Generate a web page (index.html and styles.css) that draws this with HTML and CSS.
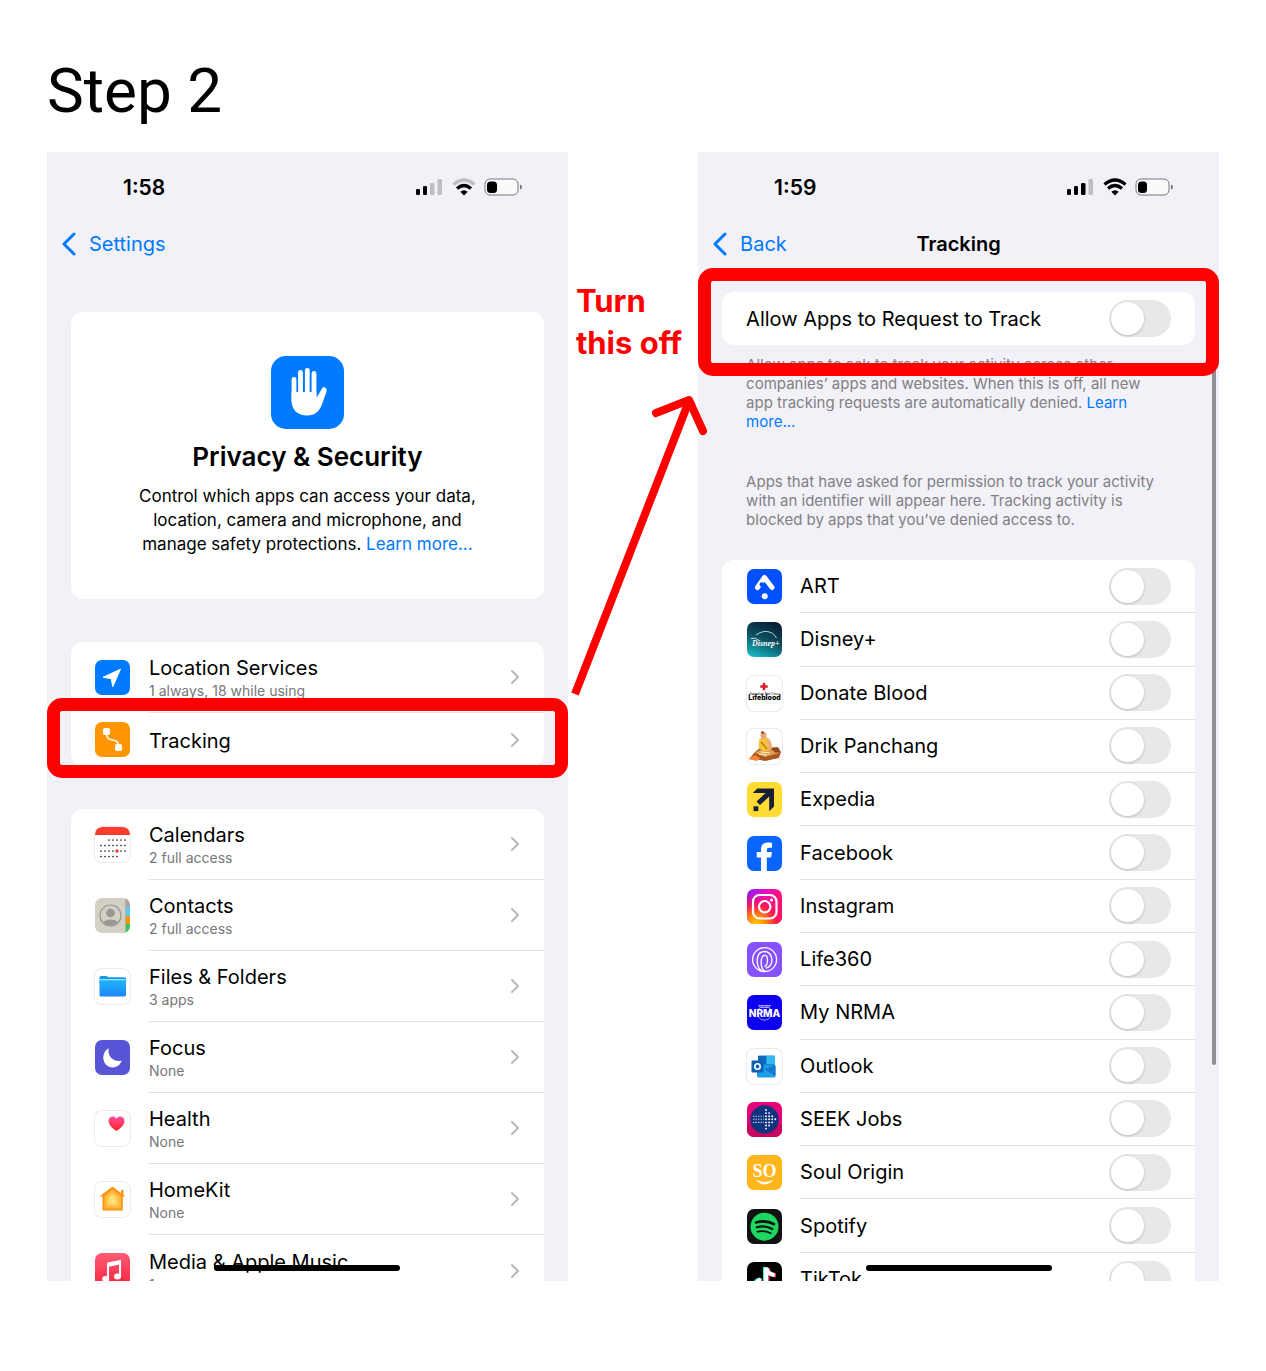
FILE: index.html
```html
<!DOCTYPE html>
<html lang="en">
<head>
<meta charset="utf-8">
<meta name="viewport" content="width=device-width, initial-scale=1">
<title>Step 2</title>
<link rel="stylesheet" href="styles.css">
</head>
<body>
<main class="page">
  <h1 class="title">Step 2</h1>
  <div class="board">

    <section class="phone" aria-label="Privacy and Security settings">
      <div class="status">
        <span class="time">1:58</span>
        <svg class="status-icons" viewBox="0 0 108 20" aria-hidden="true">
          <rect x="1" y="12" width="4" height="6" rx="1.3"/><rect x="8" y="9" width="4" height="9" rx="1.3"/>
          <g fill="#bfbec3"><rect x="15" y="6" width="4.500" height="12" rx="1.300"/><rect x="22.500" y="2" width="4.500" height="16" rx="1.300"/></g>
          <g fill="none" stroke-width="3.200"><path d="M38.500 7.500Q49 -1.500 59.500 7.500" stroke="#bfbec3"/><path d="M42 11.500Q49 5.500 56 11.500" stroke="#000"/></g>
          <path d="M45.300 14.800Q49 11.800 52.700 14.800L49 18.500Z"/>
          <rect x="70" y="2" width="33" height="16" rx="5" fill="#fafafb" stroke="#77777a"/>
          <rect x="72" y="4.500" width="10" height="11.500" rx="3.500"/><path d="M105 7.500q2 .5 2 2.500t-2 2.500z" fill="#77777a"/>
        </svg>
      </div>
      <nav class="nav">
        <a class="back" href="#settings"><svg viewBox="0 0 14 24" aria-hidden="true"><path d="M12 2 2 12l10 10"/></svg>Settings</a>
      </nav>

      <div class="card hero">
        <svg class="hero-icon" viewBox="0 0 73 73" aria-hidden="true">
          <rect width="73" height="73" rx="15" fill="#007aff"/>
          <g fill="none" stroke="#fff" stroke-width="4.800" stroke-linecap="round"><path d="M23 23.500v22M29.500 16.500v26M36.300 14.500v27M43 17.500v27"/></g>
          <path d="M20.600 36V45C20.600 54 27 59.500 36 59.500C44 59.500 49 55 51.500 47L55.500 35.500C56.300 32.500 54 30.500 51.500 31.700L45.400 42V36Z" fill="#fff"/>
        </svg>
        <h2 class="hero-title">Privacy &amp; Security</h2>
        <p class="hero-text">Control which apps can access your data,<br>location, camera and microphone, and<br>manage safety protections. <a href="#learn-privacy">Learn more...</a></p>
      </div>

      <div class="card group">
        <a class="row" href="#location">
          <svg class="icon" viewBox="0 0 35 35" aria-hidden="true"><rect width="35" height="35" rx="7" fill="#007aff"/><path d="M8 17.300 25.500 9.200 17.800 26.700 16.200 18.600Z" fill="#fff" stroke="#fff" stroke-linejoin="round"/></svg>
          <span class="cell"><span class="words"><span class="name">Location Services</span><span class="sub">1 always, 18 while using</span></span><svg class="chevron" viewBox="0 0 10 16" aria-hidden="true"><path d="m2 2 6 6-6 6"/></svg></span>
        </a>
        <a class="row row-short" href="#tracking">
          <svg class="icon" viewBox="0 0 35 35" aria-hidden="true"><rect width="35" height="35" rx="7" fill="#ff9500"/><g fill="#fff"><rect x="8" y="6" width="7" height="7" rx="1.700"/><rect x="20" y="22" width="7" height="7" rx="1.700"/></g><path d="M11.500 12C11.500 22 23.500 14 23.500 24" fill="none" stroke="#fff" stroke-width="1.600"/></svg>
          <span class="cell"><span class="words"><span class="name">Tracking</span></span><svg class="chevron" viewBox="0 0 10 16" aria-hidden="true"><path d="m2 2 6 6-6 6"/></svg></span>
          <span class="mark mark-row"></span>
        </a>
      </div>

      <div class="card group">
        <a class="row" href="#calendars">
          <svg class="icon edged" viewBox="0 0 35 35" aria-hidden="true"><path d="M0 8V7a7 7 0 0 1 7-7h21a7 7 0 0 1 7 7v1z" fill="#ff3b30"/><g stroke="#222" stroke-width="1.700" stroke-linecap="round" stroke-dasharray="0 4" fill="none"><path d="M14 13h16.100M6 18.500h24.100M6 24h24.100M6 29.500h16.100"/></g><circle cx="22" cy="24" r="1.700" fill="#ff3b30"/></svg>
          <span class="cell"><span class="words"><span class="name">Calendars</span><span class="sub">2 full access</span></span><svg class="chevron" viewBox="0 0 10 16" aria-hidden="true"><path d="m2 2 6 6-6 6"/></svg></span>
        </a>
        <a class="row" href="#contacts">
          <svg class="icon" viewBox="0 0 35 35" aria-hidden="true"><defs><clipPath id="tile"><rect width="35" height="35" rx="7"/></clipPath><clipPath id="face"><circle cx="15.500" cy="17.500" r="10"/></clipPath></defs><g clip-path="url(#tile)"><rect width="35" height="35" fill="#d3d0c6"/><rect x="31" width="4" height="9" fill="#aaa69c"/><rect x="31" y="9" width="4" height="9" fill="#5ac8fa"/><rect x="31" y="18" width="4" height="8" fill="#ff9500"/><rect x="31" y="26" width="4" height="9" fill="#34c759"/><path d="M30.500 0v35" stroke="#b5b1a7"/></g><circle cx="15.500" cy="17.500" r="10.500" fill="none" stroke="#9c9790" stroke-width="1.200"/><g clip-path="url(#face)" fill="#9c9790"><circle cx="15.500" cy="15" r="4.300"/><ellipse cx="15.500" cy="27.500" rx="9" ry="6"/></g></svg>
          <span class="cell"><span class="words"><span class="name">Contacts</span><span class="sub">2 full access</span></span><svg class="chevron" viewBox="0 0 10 16" aria-hidden="true"><path d="m2 2 6 6-6 6"/></svg></span>
        </a>
        <a class="row" href="#files">
          <svg class="icon edged" viewBox="0 0 35 35" aria-hidden="true"><defs><linearGradient id="folder" x2="0" y2="1"><stop stop-color="#1fb6fb"/><stop offset="1" stop-color="#1a85f6"/></linearGradient></defs><path d="M4.500 8.500Q4.500 7 6 7h5q1.500 0 2 1.200h16.500q1.500 0 1.500 1.500V14H4.500z" fill="#0f9be8"/><rect x="4.500" y="11" width="26.500" height="16.500" rx="1.500" fill="url(#folder)"/><path d="M5 10.700h25.500" stroke="#c6edff"/></svg>
          <span class="cell"><span class="words"><span class="name">Files &amp; Folders</span><span class="sub">3 apps</span></span><svg class="chevron" viewBox="0 0 10 16" aria-hidden="true"><path d="m2 2 6 6-6 6"/></svg></span>
        </a>
        <a class="row" href="#focus">
          <svg class="icon" viewBox="0 0 35 35" aria-hidden="true"><rect width="35" height="35" rx="7" fill="#5856d6"/><path d="M13.700 8.200C12.300 15.700 17.500 22 26.500 20.800C25 25.500 21.500 27.500 17.800 27.500C12.500 27.500 8.300 23.300 8.300 17.800C8.300 13.300 10.600 9.800 13.700 8.200Z" fill="#fff"/></svg>
          <span class="cell"><span class="words"><span class="name">Focus</span><span class="sub">None</span></span><svg class="chevron" viewBox="0 0 10 16" aria-hidden="true"><path d="m2 2 6 6-6 6"/></svg></span>
        </a>
        <a class="row" href="#health">
          <svg class="icon edged" viewBox="0 0 35 35" aria-hidden="true"><defs><linearGradient id="heart" x2="0" y2="1"><stop stop-color="#ff4fa0"/><stop offset="1" stop-color="#ff2020"/></linearGradient></defs><path d="M21.500 20C16.500 16.500 13.500 13.500 13.500 9.800C13.500 5.300 19 3.800 21.500 7.500C24 3.800 29.500 5.300 29.500 9.800C29.500 13.500 26.500 16.500 21.500 20Z" fill="url(#heart)"/></svg>
          <span class="cell"><span class="words"><span class="name">Health</span><span class="sub">None</span></span><svg class="chevron" viewBox="0 0 10 16" aria-hidden="true"><path d="m2 2 6 6-6 6"/></svg></span>
        </a>
        <a class="row" href="#homekit">
          <svg class="icon edged" viewBox="0 0 35 35" aria-hidden="true"><path d="M26 8h2.500v6H26zM17.500 4.500 30.500 14.500h-2.700V28.500H7.500V14.500H4.500Z" fill="#ff9212"/><path d="M17.500 7.500 26 14.300V26.500H9.500V14.300Z" fill="#ffb83e"/><path d="M17.500 10.500 23.500 15V24H12V15Z" fill="#ffca50"/><path d="M17.500 13 21 16v6h-7v-6Z" fill="#ffe07a"/></svg>
          <span class="cell"><span class="words"><span class="name">HomeKit</span><span class="sub">None</span></span><svg class="chevron" viewBox="0 0 10 16" aria-hidden="true"><path d="m2 2 6 6-6 6"/></svg></span>
        </a>
        <a class="row" href="#media">
          <svg class="icon" viewBox="0 0 35 35" aria-hidden="true"><defs><linearGradient id="music" x2="0" y2="1"><stop stop-color="#fb5c74"/><stop offset="1" stop-color="#fa233b"/></linearGradient></defs><rect width="35" height="35" rx="7" fill="url(#music)"/><path d="M13 25V11.300L25 8.700V22.500" fill="none" stroke="#fff" stroke-width="2"/><path d="M12.500 9.500 26 6.700v4.500L12.500 14z" fill="#fff"/><ellipse cx="10.700" cy="26" rx="3.500" ry="3" fill="#fff"/><ellipse cx="22.500" cy="23.500" rx="3.500" ry="3" fill="#fff"/></svg>
          <span class="cell"><span class="words"><span class="name">Media &amp; Apple Music</span><span class="sub">1</span></span><svg class="chevron" viewBox="0 0 10 16" aria-hidden="true"><path d="m2 2 6 6-6 6"/></svg></span>
        </a>
      </div>
      <span class="home-bar"></span>
    </section>

    <aside class="note">
      <p class="note-text">Turn<br>this off</p>
      <svg class="arrow" viewBox="0 0 140 310" aria-hidden="true"><path d="M7 306 121 13" stroke-width="8"/><path d="M88 25 121 12 135 43" stroke-width="8" stroke-linecap="round" stroke-linejoin="round"/></svg>
    </aside>

    <section class="phone" aria-label="Tracking settings">
      <div class="status">
        <span class="time">1:59</span>
        <svg class="status-icons" viewBox="0 0 108 20" aria-hidden="true">
          <rect x="1" y="12" width="4" height="6" rx="1.300"/><rect x="8" y="9" width="4" height="9" rx="1.300"/><rect x="15" y="6" width="4.500" height="12" rx="1.300"/>
          <rect x="22.500" y="2" width="4.500" height="16" rx="1.300" fill="#bfbec3"/>
          <g fill="none" stroke="#000" stroke-width="3.200"><path d="M38.500 7.500Q49 -1.500 59.500 7.500"/><path d="M42 11.500Q49 5.500 56 11.500"/></g>
          <path d="M45.300 14.800Q49 11.800 52.700 14.800L49 18.500Z"/>
          <rect x="70" y="2" width="33" height="16" rx="5" fill="#fafafb" stroke="#77777a"/>
          <rect x="72" y="4.500" width="9" height="11.500" rx="3.500"/><path d="M105 7.500q2 .5 2 2.500t-2 2.500z" fill="#77777a"/>
        </svg>
      </div>
      <nav class="nav">
        <a class="back" href="#back"><svg viewBox="0 0 14 24" aria-hidden="true"><path d="M12 2 2 12l10 10"/></svg>Back</a>
        <h2 class="nav-title">Tracking</h2>
      </nav>

      <div class="card allow">
        <label class="allow-row"><span class="name">Allow Apps to Request to Track</span><input class="toggle" type="checkbox" role="switch"></label>
        <span class="mark mark-allow"></span>
      </div>
      <p class="fine">Allow apps to ask to track your activity across other<br>companies’ apps and websites. When this is off, all new<br>app tracking requests are automatically denied. <a href="#learn-tracking">Learn<br>more...</a></p>
      <p class="fine fine-apps">Apps that have asked for permission to track your activity<br>with an identifier will appear here. Tracking activity is<br>blocked by apps that you’ve denied access to.</p>

      <div class="card apps">
        <label class="app">
          <svg class="icon" viewBox="0 0 35 35" aria-hidden="true"><rect width="35" height="35" rx="7" fill="#0050ff"/><path d="M10.500 18.500 17.500 8.500 25 18.500" fill="none" stroke="#fff" stroke-width="5" stroke-linecap="round" stroke-linejoin="round"/><circle cx="14.800" cy="15.500" r="2.300" fill="#0050ff"/><circle cx="17.700" cy="27.200" r="3" fill="#fff"/></svg>
          <span class="cell"><span class="name">ART</span><input class="toggle" type="checkbox" role="switch"></span>
        </label>
        <label class="app">
          <svg class="icon" viewBox="0 0 35 35" aria-hidden="true"><defs><linearGradient id="disney" x1=".7" x2=".3" y2="1"><stop stop-color="#071d31"/><stop offset=".5" stop-color="#0c5061"/><stop offset="1" stop-color="#16b1bc"/></linearGradient></defs><rect width="35" height="35" rx="7" fill="url(#disney)"/><path d="M9 13Q17 7 25 11 28 13 29.500 16" fill="none" stroke="#d4f1f5" stroke-width=".8"/><path d="M4 16.500Q9 15 12 18.500" fill="none" stroke="#fff" stroke-width=".8"/><text x="5" y="24" class="logo-disney">Disnep+</text></svg>
          <span class="cell"><span class="name">Disney+</span><input class="toggle" type="checkbox" role="switch"></span>
        </label>
        <label class="app">
          <svg class="icon edged" viewBox="0 0 35 35" aria-hidden="true"><path d="M17 6.800v7.400M13.300 10.500h7.400" stroke="#d91f26" stroke-width="2.500"/><text x="17.500" y="18.500" class="logo-cross">Australian Red Cross</text><text x="17.500" y="24.300" class="logo-blood">Lifeblood</text></svg>
          <span class="cell"><span class="name">Donate Blood</span><input class="toggle" type="checkbox" role="switch"></span>
        </label>
        <label class="app">
          <svg class="icon edged" viewBox="0 0 35 35" aria-hidden="true"><path d="M7 24 13 19l18-1 3 5-2 6-14 3-15-3z" fill="#a9581f"/><path d="M8 24 15 20l13 1 4 3-14 4z" fill="#e2a052"/><path d="M12 20c-1-5 0-10 3-12h4c5 2 6 7 6 12l-5 2z" fill="#efae79"/><path d="M12 10q6 1 7-2l2 13-4 1-5-4z" fill="#f2ca32"/><path d="M14 13l6 7" stroke="#d96a22" stroke-width="1.500"/><circle cx="16.500" cy="6" r="3" fill="#e9a16f"/><circle cx="15.500" cy="3.500" r="1.300" fill="#773a22"/><path d="M1 30l7-4 5 3-3 3z" fill="#f0863a"/><path d="M24 20q5-3 9 2l-4 2z" fill="#8c481f"/><path d="m14 23 9 1M12 25l8 1" stroke="#fff3cf"/></svg>
          <span class="cell"><span class="name">Drik Panchang</span><input class="toggle" type="checkbox" role="switch"></span>
        </label>
        <label class="app">
          <svg class="icon" viewBox="0 0 35 35" aria-hidden="true"><rect width="35" height="35" rx="7" fill="#fddb32"/><path d="M5.800 11 10.300 6.500H27V24.500L22.200 29.300V14.500L13 23 9.500 19.500 18.500 11Z" fill="#191e3b"/><path d="M6.500 24.300h4.800v4.800H6.500z" fill="#191e3b"/></svg>
          <span class="cell"><span class="name">Expedia</span><input class="toggle" type="checkbox" role="switch"></span>
        </label>
        <label class="app">
          <svg class="icon" viewBox="0 0 35 35" aria-hidden="true"><rect width="35" height="35" rx="7" fill="#0866ff"/><path d="M14 35V21.500H9.700V16H14V13.500C14 8.800 16.500 6.500 21 6.500L25 6.800V11.700H22.500C20.500 11.700 19.800 12.500 19.800 14.200V16H25L24 21.500H19.800V35Z" fill="#fff"/></svg>
          <span class="cell"><span class="name">Facebook</span><input class="toggle" type="checkbox" role="switch"></span>
        </label>
        <label class="app">
          <svg class="icon" viewBox="0 0 35 35" aria-hidden="true"><defs><linearGradient id="insta" x2="1" y2=".2"><stop stop-color="#7a1cff"/><stop offset=".5" stop-color="#e60bc8"/><stop offset="1" stop-color="#ff1370"/></linearGradient><radialGradient id="glow" cx=".25" cy="1.050" r="1"><stop stop-color="#ffd500"/><stop offset=".3" stop-color="#ff8a10"/><stop offset=".6" stop-color="#ff1848" stop-opacity=".9"/><stop offset="1" stop-color="#ff0a80" stop-opacity="0"/></radialGradient></defs><rect width="35" height="35" rx="7" fill="url(#insta)"/><rect width="35" height="35" rx="7" fill="url(#glow)"/><g fill="none" stroke="#fff" stroke-width="2.200"><rect x="6" y="6" width="23.500" height="23.500" rx="6.500"/><circle cx="17.700" cy="17.700" r="5.700"/></g><circle cx="24.500" cy="11" r="1.600" fill="#fff"/></svg>
          <span class="cell"><span class="name">Instagram</span><input class="toggle" type="checkbox" role="switch"></span>
        </label>
        <label class="app">
          <svg class="icon" viewBox="0 0 35 35" aria-hidden="true"><rect width="35" height="35" rx="7" fill="#8652ff"/><g fill="none" stroke="#fff" stroke-width="1.300"><circle cx="17.600" cy="17.600" r="12"/><path d="M20 29.300C12.500 29.300 13.800 17 15.500 14.500C17 12.500 20 13 20.300 16C20.800 21 20 24 17.500 24.500"/><path d="M15 29C8 24 8.500 9.500 17.700 9.500C27 9.500 27 25.500 19 26"/></g></svg>
          <span class="cell"><span class="name">Life360</span><input class="toggle" type="checkbox" role="switch"></span>
        </label>
        <label class="app">
          <svg class="icon" viewBox="0 0 35 35" aria-hidden="true"><rect width="35" height="35" rx="7" fill="#0d00ee"/><g fill="none" stroke="#9d9aff"><circle cx="17.500" cy="18" r="7.200"/><path d="M11.500 10.500h12l-2 2h-8z"/></g><text x="17.500" y="21.800" class="logo-nrma">NRMA</text></svg>
          <span class="cell"><span class="name">My NRMA</span><input class="toggle" type="checkbox" role="switch"></span>
        </label>
        <label class="app">
          <svg class="icon edged" viewBox="0 0 35 35" aria-hidden="true"><rect x="11" y="6.500" width="17" height="16" rx="1" fill="#1490df"/><path d="M11 7h8.500v8H11z" fill="#0f6cbd"/><path d="M19.500 7H28v8h-8.500z" fill="#35b8f1"/><path d="M10 17 28.500 17V27q0 1.500-1.500 1.500H12q-2 0-2-1.500z" fill="#1e9de9"/><path d="M28.500 16.500V27L17 20z" fill="#1976cf"/><rect x="4.500" y="11.500" width="12" height="12" rx="1" fill="#0f5fb8"/><circle cx="10.500" cy="17.500" r="2.700" fill="none" stroke="#fff" stroke-width="1.600"/></svg>
          <span class="cell"><span class="name">Outlook</span><input class="toggle" type="checkbox" role="switch"></span>
        </label>
        <label class="app">
          <svg class="icon" viewBox="0 0 35 35" aria-hidden="true"><rect width="35" height="35" rx="7" fill="#e60278"/><path d="M0 22v6a7 7 0 0 0 7 7h21a7 7 0 0 0 7-7v-6z" fill="#c9055f"/><circle cx="17.500" cy="17.500" r="14.300" fill="#12337f"/><g stroke="#fff" stroke-width="1.900" stroke-linecap="round" stroke-dasharray="0 3.100" fill="none"><path d="M19 8v20M22.100 11.100v13.500M25.200 14.200v7M28.300 17.300v.1"/></g><g stroke="#afc0e5" stroke-width="1.100" stroke-dasharray="1.500 1"><path d="M6 14.200h11M6 17.300h11M6 20.400h11"/></g></svg>
          <span class="cell"><span class="name">SEEK Jobs</span><input class="toggle" type="checkbox" role="switch"></span>
        </label>
        <label class="app">
          <svg class="icon" viewBox="0 0 35 35" aria-hidden="true"><rect width="35" height="35" rx="7" fill="#ffb61a"/><text x="17.500" y="21.800" class="logo-so">SO</text><path d="M9.700 25.500Q17.500 33 25.500 25.500Q17.500 29 9.700 25.500Z" fill="#fff" stroke="#fff" stroke-width=".6"/></svg>
          <span class="cell"><span class="name">Soul Origin</span><input class="toggle" type="checkbox" role="switch"></span>
        </label>
        <label class="app">
          <svg class="icon" viewBox="0 0 35 35" aria-hidden="true"><rect width="35" height="35" rx="7" fill="#121212"/><circle cx="17.500" cy="17.700" r="14" fill="#1ed760"/><g fill="none" stroke="#121212" stroke-linecap="round"><path d="M9 13.500Q19 10.500 27 15.200" stroke-width="2.600"/><path d="M9.800 18.300Q18 16 25.300 20" stroke-width="2.200"/><path d="M10.500 22.700Q18 21 23.700 24.300" stroke-width="1.800"/></g></svg>
          <span class="cell"><span class="name">Spotify</span><input class="toggle" type="checkbox" role="switch"></span>
        </label>
        <label class="app">
          <svg class="icon" viewBox="0 0 35 35" aria-hidden="true"><rect width="35" height="35" rx="7" fill="#000"/><g fill="none" stroke-width="4"><path d="M18 5v17.500a5 5 0 1 1-5-5M18.500 6q1 6 8 6.500" stroke="#25f4ee"/><path d="M20.500 6v17.500a5 5 0 1 1-5-5M21 7q1 6 8 6.500" stroke="#fe2c55"/><path d="M19.200 5.500V23a5 5 0 1 1-5-5M19.700 6.500q1 6 8 6.500" stroke="#fff"/></g></svg>
          <span class="cell"><span class="name">TikTok</span><input class="toggle" type="checkbox" role="switch"></span>
        </label>
      </div>
      <span class="scroll-thumb"></span>
      <span class="home-bar"></span>
    </section>

  </div>
</main>
</body>
</html>
```
FILE: styles.css
```css
* { box-sizing: border-box; }

body {
  margin: 0;
  background: #fff;
  color: #000;
  font-family: Inter, "Liberation Sans", sans-serif;
  font-size: 20px;
}

h1, h2, p { margin: 0; }
a { color: #007aff; text-decoration: none; }

.page { padding: 52px 47px 90px; }

.title {
  font-family: Roboto, Inter, sans-serif;
  font-size: 62px;
  font-weight: 400;
  line-height: 78px;
  margin-bottom: 22px;
}

.board {
  display: grid;
  grid-template-columns: minmax(0, 4fr) minmax(0, 1fr) minmax(0, 4fr);
}

/* Phone screens */
.phone {
  position: relative;
  aspect-ratio: 521 / 1129;
  min-height: 0;
  overflow: hidden;
  background: #f2f1f7;
}

.status {
  display: flex;
  align-items: center;
  justify-content: space-between;
  height: 70px;
  padding: 0 45px 0 76px;
}
.time { font-size: 21px; font-weight: 600; }
.status-icons { width: 108px; height: 20px; }

.nav {
  display: grid;
  grid-template-columns: 1fr auto 1fr;
  align-items: center;
  height: 43px;
  padding: 0 15px;
}
.back { display: flex; align-items: center; gap: 13px; }
.back svg {
  width: 14px;
  height: 24px;
  fill: none;
  stroke: #007aff;
  stroke-width: 3;
  stroke-linecap: round;
  stroke-linejoin: round;
}
.nav-title { font-size: 20px; font-weight: 600; }

.card { margin: 0 24px; border-radius: 12px; background: #fff; }

/* Intro card */
.hero {
  display: flex;
  flex-direction: column;
  align-items: center;
  margin-top: 47px;
  padding: 44px 24px 43px;
  text-align: center;
}
.hero-icon { width: 73px; height: 73px; }
.hero-title { margin-top: 12px; font-size: 26px; font-weight: 600; line-height: 32px; }
.hero-text { margin-top: 11px; font-size: 17px; line-height: 24px; }

/* Rows that open another screen */
.group { margin-top: 43px; }
.row {
  position: relative;
  display: flex;
  align-items: center;
  gap: 19px;
  height: 71px;
  padding-left: 24px;
  color: inherit;
}
.row-short { height: 53px; }
.icon { flex: none; width: 35px; height: 35px; }
.edged { border-radius: 7px; box-shadow: 0 0 0 1px #ebebed; }
.cell {
  display: flex;
  flex: 1;
  align-items: center;
  justify-content: space-between;
  align-self: stretch;
  padding-right: 24px;
  border-bottom: 1px solid #e2e2e4;
}
.row:last-child .cell, .app:last-child .cell { border-bottom: 0; }
.words { display: flex; flex-direction: column; padding-top: 2px; }
.name { line-height: 26px; }
.sub { color: #77777b; font-size: 14px; line-height: 20px; }
.chevron {
  width: 10px;
  height: 16px;
  fill: none;
  stroke: #b9b9bc;
  stroke-width: 2;
  stroke-linecap: round;
  stroke-linejoin: round;
}

/* Tracking screen */
.allow { position: relative; margin-top: 27px; }
.allow-row {
  display: flex;
  align-items: center;
  justify-content: space-between;
  height: 53px;
  padding: 0 24px;
}
.fine { padding: 10px 48px 0; color: #808085; font-size: 15px; line-height: 19px; }
.fine-apps { margin-top: 31px; }
.apps {
  display: grid;
  grid-auto-rows: 1fr;
  height: 746px;
  margin-top: 31px;
}
.app { display: flex; align-items: center; gap: 18px; padding-left: 25px; }

.toggle {
  display: grid;
  flex: none;
  align-items: center;
  width: 62px;
  height: 37px;
  margin: 0;
  padding: 2px;
  border-radius: 19px;
  background: #e8e8e8;
  appearance: none;
}
.toggle::before {
  content: "";
  width: 33px;
  height: 33px;
  border-radius: 50%;
  background: #fff;
  box-shadow: 0 1px 3px #0003;
}
.toggle:checked { background: #34c759; }
.toggle:checked::before { justify-self: end; }

.scroll-thumb {
  position: absolute;
  top: 215px;
  right: 3px;
  width: 4px;
  height: 698px;
  border-radius: 2px;
  background: #8f8f94;
}
.home-bar {
  position: absolute;
  bottom: 10px;
  left: 50%;
  width: 186px;
  height: 6px;
  border-radius: 3px;
  background: #000;
  transform: translateX(-50%);
}

/* Red markings */
.mark {
  position: absolute;
  z-index: 1;
  border: 13px solid #f00;
  border-radius: 15px;
  pointer-events: none;
}
.mark-row { inset: -15px -24px -12px; }
.mark-allow { inset: -24px -24px -31px; }

.note { position: relative; z-index: 2; }
.note-text {
  padding: 128px 0 0 8px;
  color: #f00;
  font-size: 31px;
  font-weight: 700;
  line-height: 42px;
  white-space: nowrap;
}
.arrow {
  position: absolute;
  top: 236px;
  left: 0;
  width: 140px;
  height: 310px;
  fill: none;
  stroke: #f00;
}

/* Lettering inside app icons */
.logo-disney { fill: #fff; font: italic 700 8px "Liberation Serif", serif; }
.logo-cross { font: 3px Inter, sans-serif; text-anchor: middle; }
.logo-blood { font: 800 7px Inter, sans-serif; text-anchor: middle; }
.logo-nrma { fill: #fff; font: 800 10px Inter, sans-serif; text-anchor: middle; }
.logo-so { fill: #fff; font: 700 18px "Liberation Serif", serif; text-anchor: middle; }
```
